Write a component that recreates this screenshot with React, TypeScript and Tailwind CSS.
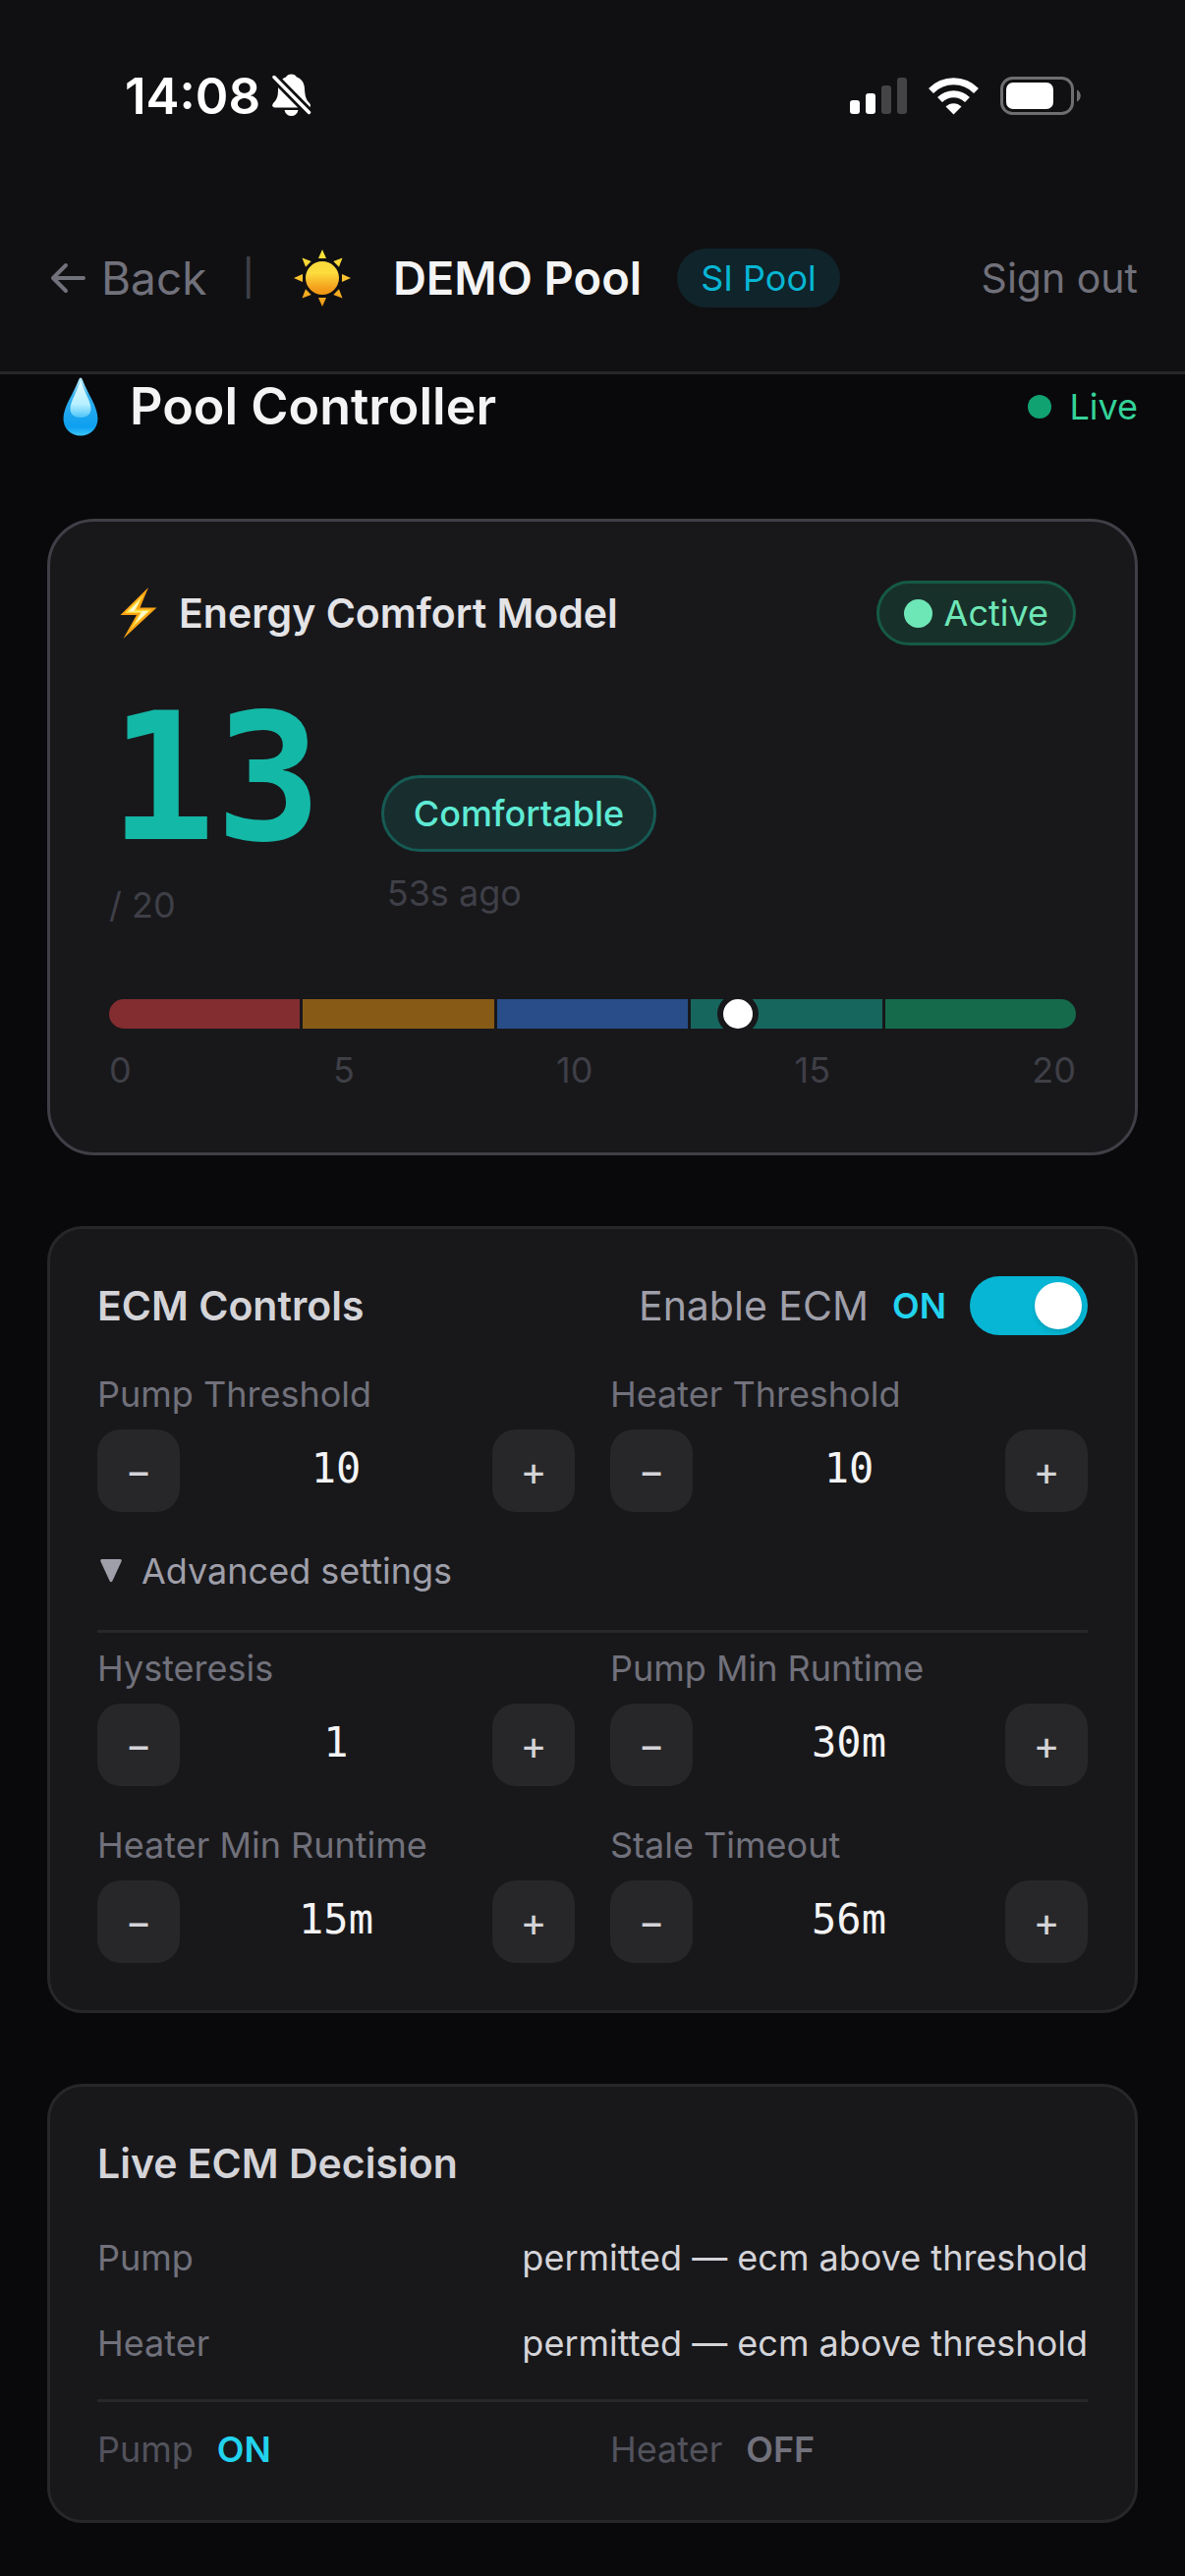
import { useState } from "react"

const BAR_SEGMENTS = ["bg-[#832d31]", "bg-[#875a15]", "bg-[#284d88]", "bg-[#17665e]", "bg-[#156a4c]"]
const BAR_LABELS = [0, 5, 10, 15, 20]

function StatusBar() {
  return (
    <div className="flex h-[192px] items-center justify-between pt-1 pr-[105px] pl-[127px] text-white">
      <div className="flex items-center gap-3">
        <span className="text-[51px] leading-[60px] font-semibold">14:08</span>
        <svg width="42" height="46" viewBox="0 0 42 46" fill="currentColor" aria-label="Silent mode">
          <path d="M19.500 0.500C22 0.500 24 1.500 25 3.500C30.500 5.500 33 10 33 16C33.500 24 35 27 37.500 29.500C40 32 39.500 34.500 36 34.500H3C-0.500 34.500 -0.500 31.500 1.500 29.500C5 26 6 23 6 16C6 10 8.500 5.500 14 3.500C15 1.500 17 0.500 19.500 0.500Z" />
          <path d="M12.500 37H26.500C25.500 41 23 43 19.500 43C16 43 13.500 41 12.500 37Z" />
          <path d="M2 3.500L37.500 39.500" stroke="#101012" strokeWidth="9" />
          <path d="M2 3.500L37.500 39.500" stroke="currentColor" strokeWidth="3.500" strokeLinecap="round" />
        </svg>
      </div>
      <div className="flex items-center gap-[22px]">
        <svg width="58" height="38" viewBox="0 0 58 38" fill="currentColor" aria-label="Signal">
          <rect x="0" y="23" width="10" height="14" rx="3" />
          <rect x="16" y="16" width="10" height="21" rx="3" />
          <rect x="32" y="8" width="10" height="29" rx="3" opacity=".22" />
          <rect x="48" y="0" width="10" height="37" rx="3" opacity=".22" />
        </svg>
        <svg width="51" height="38" viewBox="0 0 51 38" fill="none" stroke="currentColor" aria-label="Wi-Fi">
          <path d="M2.500 13.500C15.500 0.600 35.500 0.600 48.500 13.500" strokeWidth="7" />
          <path d="M11.500 22.500C19.500 14.700 31.500 14.700 39.500 22.500" strokeWidth="7" />
          <path d="M17.500 29.500C22 25 29 25 33.500 29.500L25.500 37.500Z" fill="currentColor" stroke="none" />
        </svg>
        <svg width="83" height="40" viewBox="0 0 83 40" fill="none" aria-label="Battery">
          <rect x="1.500" y="1.500" width="72" height="36" rx="11" stroke="#6e6e70" strokeWidth="3" />
          <rect x="6" y="6" width="48" height="27" rx="7" fill="white" />
          <path d="M78 13.500C83 15.500 83 23.500 78 25.500Z" fill="#6e6e70" />
        </svg>
      </div>
    </div>
  )
}

function Sun() {
  const rays = [0, 45, 90, 135, 180, 225, 270, 315]
  return (
    <svg width="58" height="58" viewBox="0 0 58 58" aria-hidden="true">
      <defs>
        <linearGradient id="sun" x1="0" y1="0" x2="0" y2="58" gradientUnits="userSpaceOnUse">
          <stop offset="0" stopColor="#fdea3c" />
          <stop offset="0.5" stopColor="#fbc22d" />
          <stop offset="1" stopColor="#f09a17" />
        </linearGradient>
        <linearGradient id="disc" x1="0" y1="0" x2="0" y2="1">
          <stop offset="0" stopColor="#fbd93a" />
          <stop offset="0.35" stopColor="#fddc3e" />
          <stop offset="0.8" stopColor="#f3a01c" />
          <stop offset="1" stopColor="#ef9514" />
        </linearGradient>
      </defs>
      <circle cx="29" cy="29" r="17" fill="url(#disc)" />
      <g fill="url(#sun)">
        {rays.map((angle) => {
          const a = (angle * Math.PI) / 180
          const point = (r: number, d: number) =>
            `${29 + r * Math.sin(a) + d * Math.cos(a)},${29 - r * Math.cos(a) + d * Math.sin(a)}`
          return <polygon key={angle} points={`${point(29, 0)} ${point(20, 4)} ${point(20, -4)}`} />
        })}
      </g>
    </svg>
  )
}

function Drop() {
  return (
    <svg width="36" height="60" viewBox="0 0 36 60" aria-hidden="true">
      <defs>
        <linearGradient id="drop" x1="0" y1="0" x2="0" y2="1">
          <stop offset="0" stopColor="#bdeefc" />
          <stop offset="0.3" stopColor="#35b0ee" />
          <stop offset="0.85" stopColor="#0d9ff0" />
          <stop offset="1" stopColor="#3cc8fa" />
        </linearGradient>
        <linearGradient id="shine" x1="0" y1="0" x2="0" y2="1">
          <stop offset="0" stopColor="#e8fbff" />
          <stop offset="0.65" stopColor="#b5efff" />
          <stop offset="1" stopColor="#4cc4f8" />
        </linearGradient>
      </defs>
      <path d="M18 0.500C17 0.500 16.500 1.500 15.500 4C11 16 0.500 30 0.500 42C0.500 52.500 8.500 59.500 18 59.500S35.500 52.500 35.500 42C35.500 30 25 16 20.500 4C19.500 1.500 19 0.500 18 0.500Z" fill="url(#drop)" />
      <path d="M18 3C15 14 7.500 24 7.500 32C7.500 38 12 41 18 41S28.500 38 28.500 32C28.500 24 21 14 18 3Z" fill="url(#shine)" />
    </svg>
  )
}

function Bolt() {
  return (
    <svg width="38" height="54" viewBox="0 0 38 54" aria-hidden="true">
      <path d="M29 1L0.500 29H17L3.500 53L37.500 21.500H20.500Z" fill="#fba314" />
      <path d="M24 8L5 27H20.500L11 43L32 23.500H16.500Z" fill="#fddc3a" />
      <path d="M21 13L8.500 25.500H22.500L15.500 38L29 25H14.500Z" fill="#fffbd0" />
    </svg>
  )
}

type StepperProps = {
  label: string
  initial: number
  unit?: string
}

function Stepper({ label, initial, unit = "" }: StepperProps) {
  const [value, setValue] = useState(initial)
  const button = "flex size-[84px] items-center justify-center rounded-3xl bg-zinc-800 text-[41px] leading-[60px] text-zinc-300"

  return (
    <div role="group" aria-label={label}>
      <p className="mb-3 text-4xl leading-[48px] text-zinc-500">{label}</p>
      <div className="flex items-center justify-between">
        <button type="button" aria-label={`Decrease ${label}`} className={button} onClick={() => setValue(value - 1)}>
          −
        </button>
        <output className="pb-1 font-['DejaVu_Sans_Mono',monospace] text-[42px] leading-[60px] text-zinc-100">
          {value}
          {unit}
        </output>
        <button type="button" aria-label={`Increase ${label}`} className={button} onClick={() => setValue(value + 1)}>
          +
        </button>
      </div>
    </div>
  )
}

function EnergyCard() {
  const score = 13
  return (
    <section className="rounded-[48px] border-[3px] border-zinc-700 bg-zinc-900 p-[60px]">
      <div className="flex items-center justify-between">
        <h2 className="flex items-center gap-[22px] pl-[11px] text-[41px] leading-[60px] font-semibold text-zinc-200">
          <Bolt />
          Energy Comfort Model
        </h2>
        <span className="flex h-[66px] items-center gap-3 rounded-full border-[3px] border-[#155a44] bg-[#18302a] px-[25px] text-4xl text-[#6ee7b7]">
          <span className="size-[29px] rounded-full bg-[#6ee7b7]" />
          Active
        </span>
      </div>

      <div className="mt-[45px] flex items-end gap-[60px]">
        <div>
          <p className="font-['DejaVu_Sans_Mono',monospace] text-[180px] leading-[180px] font-bold text-[#14b8a6]">13</p>
          <p className="mt-[15px] text-4xl leading-[48px] text-zinc-700">/ 20</p>
        </div>
        <div className="flex flex-col items-start gap-[18px] pb-3">
          <span className="flex h-[78px] items-center rounded-full border-[3px] border-[#165a54] bg-[#182d2e] px-[30px] text-4xl font-medium text-[#5eead4]">
            Comfortable
          </span>
          <span className="pl-1.5 text-4xl leading-[48px] text-zinc-700">53s ago</span>
        </div>
      </div>

      <div className="relative mt-[72px]">
        <div className="flex h-[30px] gap-[3px] overflow-hidden rounded-full">
          {BAR_SEGMENTS.map((color) => (
            <div key={color} className={`flex-1 ${color}`} />
          ))}
        </div>
        <div
          className="absolute top-1/2 size-[42px] -translate-x-1/2 -translate-y-1/2 rounded-full border-[6px] border-zinc-900 bg-white"
          style={{ left: `${(score / 20) * 100}%` }}
        />
      </div>
      <div className="mt-[18px] flex justify-between text-4xl leading-[48px] text-zinc-700">
        {BAR_LABELS.map((n) => (
          <span key={n}>{n}</span>
        ))}
      </div>
    </section>
  )
}

function ControlsCard() {
  const [enabled, setEnabled] = useState(true)
  const [open, setOpen] = useState(true)

  return (
    <section className="rounded-[36px] border-[3px] border-zinc-800 bg-zinc-900 p-12">
      <div className="flex items-center justify-between">
        <h2 className="text-[41px] leading-[60px] font-semibold text-zinc-300">ECM Controls</h2>
        <div className="flex items-center gap-6">
          <span id="enable-ecm" className="text-[41px] leading-[60px] text-zinc-400">Enable ECM</span>
          <span className="text-4xl font-semibold text-[#22d3ee]">{enabled ? "ON" : "OFF"}</span>
          <button
            type="button"
            role="switch"
            aria-checked={enabled}
            aria-labelledby="enable-ecm"
            onClick={() => setEnabled(!enabled)}
            className={`flex h-[60px] w-[120px] items-center rounded-full px-1.5 ${enabled ? "justify-end bg-[#06b6d4]" : "justify-start bg-zinc-700"}`}
          >
            <span className="size-12 rounded-full bg-white shadow-md" />
          </button>
        </div>
      </div>

      <div className="mt-9 grid grid-cols-2 gap-9">
        <Stepper label="Pump Threshold" initial={10} />
        <Stepper label="Heater Threshold" initial={10} />
      </div>

      <button
        type="button"
        aria-expanded={open}
        onClick={() => setOpen(!open)}
        className="mt-9 flex items-center gap-5 pl-[3px] text-4xl leading-[48px] text-zinc-400"
      >
        <svg width="22" height="24" viewBox="0 0 22 24" fill="currentColor" aria-hidden="true">
          <path d="M2 0H20Q22.500 0 21.500 2.500L12.500 22Q11 24.500 9.500 22L0.500 2.500Q-0.500 0 2 0Z" />
        </svg>
        Advanced settings
      </button>

      {open && (
        <div className="mt-9 grid grid-cols-2 gap-9 border-t-[3px] border-zinc-800 pt-3">
          <Stepper label="Hysteresis" initial={1} />
          <Stepper label="Pump Min Runtime" initial={30} unit="m" />
          <Stepper label="Heater Min Runtime" initial={15} unit="m" />
          <Stepper label="Stale Timeout" initial={56} unit="m" />
        </div>
      )}
    </section>
  )
}

function DecisionCard() {
  return (
    <section className="rounded-[36px] border-[3px] border-zinc-800 bg-zinc-900 p-12 text-4xl">
      <h2 className="text-[41px] leading-[60px] font-semibold text-zinc-300">Live ECM Decision</h2>
      <dl className="mt-9 flex flex-col gap-[27px] leading-[60px]">
        <div className="flex justify-between">
          <dt className="text-zinc-500">Pump</dt>
          <dd className="text-zinc-300">permitted — ecm above threshold</dd>
        </div>
        <div className="flex justify-between">
          <dt className="text-zinc-500">Heater</dt>
          <dd className="text-zinc-300">permitted — ecm above threshold</dd>
        </div>
      </dl>
      <div className="mt-[27px] grid grid-cols-2 gap-9 border-t-[3px] border-zinc-800 pt-6 leading-[48px]">
        <p className="flex gap-6 text-zinc-600">
          Pump <span className="font-semibold text-[#22d3ee]">ON</span>
        </p>
        <p className="flex gap-6 text-zinc-600">
          Heater <span className="font-semibold text-zinc-500">OFF</span>
        </p>
      </div>
    </section>
  )
}

export default function App() {
  return (
    <div className="min-h-screen bg-zinc-950 font-[Inter,'Liberation_Sans',sans-serif]">
      <header className="border-b-[3px] border-zinc-800 bg-[#101012]">
        <StatusBar />
        <div className="flex h-[186px] items-center justify-between px-12 pb-1">
          <div className="flex items-center">
            <a href="#" className="flex items-center gap-[15px] text-[46px] leading-[72px] text-zinc-500">
              <svg width="40" height="32" viewBox="0 0 40 32" fill="none" stroke="currentColor" strokeWidth="4" strokeLinecap="round" strokeLinejoin="round" aria-hidden="true">
                <path d="M37 16H7M19 3L6 16L19 29" />
              </svg>
              Back
            </a>
            <span className="ml-9 text-4xl leading-[72px] font-medium text-zinc-700">|</span>
            <span className="mr-[43px] ml-10">
              <Sun />
            </span>
            <h1 className="text-[47px] leading-[72px] font-semibold text-zinc-100">DEMO Pool</h1>
            <span className="ml-9 flex h-[60px] items-center rounded-full bg-[#10242b] px-6 text-4xl text-[#06b6d4]">SI Pool</span>
          </div>
          <button type="button" className="text-[41px] leading-[60px] text-zinc-500">
            Sign out
          </button>
        </div>
      </header>

      <main className="flex flex-col gap-[72px] px-12 pb-12">
        <div className="flex h-[75px] items-start justify-between">
          <h1 className="flex items-center gap-8 pl-4 text-[52px] leading-[66px] font-semibold text-zinc-100">
            <Drop />
            Pool Controller
          </h1>
          <p className="flex items-center gap-[18px] text-4xl leading-[66px] text-[#34d399]">
            <span className="size-6 rounded-full bg-[#10a371]" />
            Live
          </p>
        </div>
        <EnergyCard />
        <ControlsCard />
        <DecisionCard />
      </main>
    </div>
  )
}
